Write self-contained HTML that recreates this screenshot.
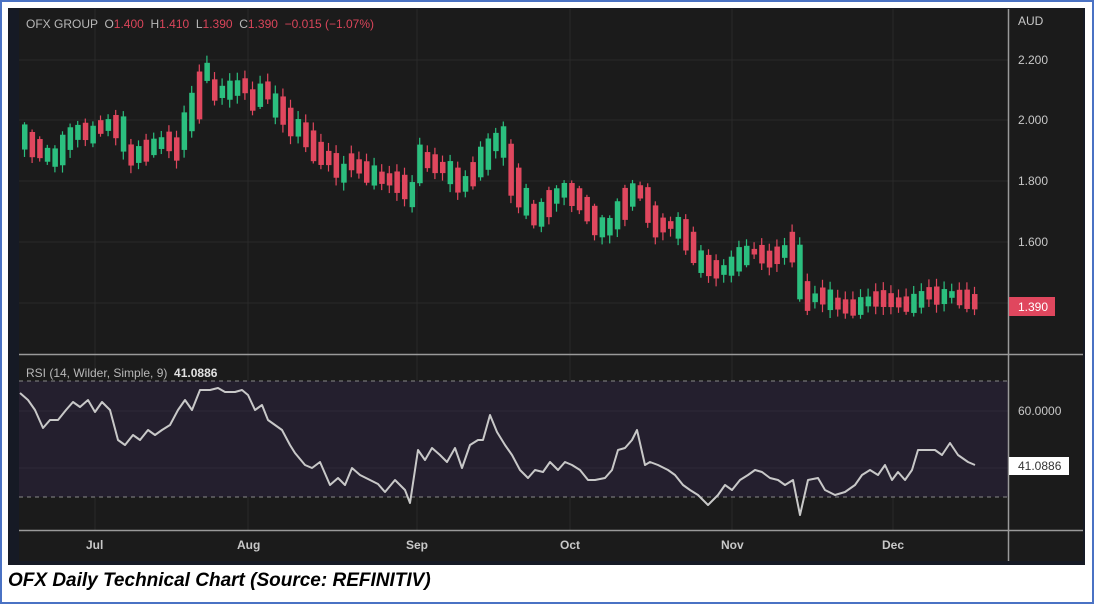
<!DOCTYPE html>
<html><head><meta charset="utf-8"><style>
html,body{margin:0;padding:0;width:1094px;height:604px;overflow:hidden;background:#fff;}
#wrap{position:absolute;left:0;top:0;width:1090px;height:600px;border:2px solid #4a72c4;background:#fff;}
#cap{position:absolute;left:8px;top:570px;font-family:"Liberation Sans",sans-serif;font-style:italic;font-weight:bold;font-size:19px;color:#000;}
svg text{font-family:"Liberation Sans",sans-serif;white-space:pre;}
</style></head><body>
<div id="wrap"></div>
<svg id="s" width="1094" height="604" style="position:absolute;left:0;top:0">
<rect x="8" y="8" width="1077" height="557" fill="#161a25"/>
<rect x="19" y="9" width="1064" height="552" fill="#1b1b1b"/>
<g stroke="#2a2a2a" stroke-width="1">
<line x1="19" x2="1008" y1="60" y2="60"/><line x1="19" x2="1008" y1="120" y2="120"/><line x1="19" x2="1008" y1="181" y2="181"/><line x1="19" x2="1008" y1="242" y2="242"/><line x1="19" x2="1008" y1="303" y2="303"/>
<line x1="95" x2="95" y1="9" y2="530"/><line x1="248" x2="248" y1="9" y2="530"/><line x1="417" x2="417" y1="9" y2="530"/><line x1="570" x2="570" y1="9" y2="530"/><line x1="732" x2="732" y1="9" y2="530"/><line x1="893" x2="893" y1="9" y2="530"/>
</g>
<rect x="19" y="381" width="989" height="116" fill="#241f2e"/>
<line x1="19" x2="1008" y1="411" y2="411" stroke="#2e2a38"/>
<line x1="19" x2="1008" y1="468" y2="468" stroke="#2e2a38"/>
<line x1="19" x2="1008" y1="381" y2="381" stroke="#888" stroke-dasharray="4 4"/>
<line x1="19" x2="1008" y1="497" y2="497" stroke="#888" stroke-dasharray="4 4"/>
<line x1="19" x2="1083" y1="354.5" y2="354.5" stroke="#9a9a9a" stroke-width="1.5"/>
<line x1="19" x2="1083" y1="530.5" y2="530.5" stroke="#9a9a9a" stroke-width="1.5"/>
<line x1="1008.5" x2="1008.5" y1="9" y2="561" stroke="#9a9a9a" stroke-width="1.5"/>
<g id="cd"></g>
<polyline id="rsi" fill="none" stroke="#c8c8c8" stroke-width="2" stroke-linejoin="round"/>
<text x="26" y="28" font-size="12" fill="#b8b8b8">OFX GROUP  O<tspan fill="#d9455a">1.400</tspan>  H<tspan fill="#d9455a">1.410</tspan>  L<tspan fill="#d9455a">1.390</tspan>  C<tspan fill="#d9455a">1.390</tspan>  <tspan fill="#d9455a">−0.015 (−1.07%)</tspan></text>
<text x="26" y="377" font-size="12" fill="#b8b8b8">RSI (14, Wilder, Simple, 9)  <tspan fill="#e0e0e0" font-weight="bold">41.0886</tspan></text>
<g font-size="12" fill="#c8c8c8">
<text x="1018" y="25">AUD</text><text x="1018" y="64">2.200</text><text x="1018" y="124">2.000</text><text x="1018" y="185">1.800</text><text x="1018" y="246">1.600</text>
<text x="1018" y="415">60.0000</text>
<text x="86" y="549" font-weight="bold">Jul</text><text x="237" y="549" font-weight="bold">Aug</text><text x="406" y="549" font-weight="bold">Sep</text><text x="560" y="549" font-weight="bold">Oct</text><text x="721" y="549" font-weight="bold">Nov</text><text x="882" y="549" font-weight="bold">Dec</text>
</g>
<rect x="1009" y="297" width="46" height="19" fill="#e0475e"/>
<text x="1018" y="311" font-size="12" fill="#fff">1.390</text>
<rect x="1009" y="457" width="60" height="18" fill="#fff"/>
<text x="1018" y="470" font-size="12" fill="#333">41.0886</text>
</svg>
<div id="cap">OFX Daily Technical Chart (Source: REFINITIV)</div>
<script>
var P=[20,135,30,145,40,150,50,160,60,150,70,135,80,130,90,135,100,125,110,125,120,130,125,155,135,155,145,150,155,145,165,140,175,150,182,130,190,110,197,95,205,70,212,90,220,92,228,90,235,88,242,85,250,100,258,95,265,90,272,105,280,110,290,125,300,130,310,145,320,155,330,160,340,175,350,160,360,170,370,175,380,178,390,180,400,185,410,195,415,165,425,160,435,165,445,170,455,180,465,185,475,165,485,155,492,145,498,130,505,160,512,180,520,195,528,210,535,220,545,205,555,195,562,190,570,195,578,200,585,210,595,225,605,230,615,215,625,200,635,190,642,195,650,220,660,225,670,225,680,230,690,245,695,260,705,265,715,270,725,270,735,260,745,255,755,250,765,260,775,255,785,250,793,245,800,290,808,300,818,295,828,300,838,305,848,308,858,306,868,300,878,298,888,300,898,303,908,305,918,300,928,292,938,298,948,294,958,298,968,300,975,303];
function interp(A,x){for(var i=0;i<A.length-2;i+=2){if(x<=A[i+2])return A[i+1]+(A[i+3]-A[i+1])*(x-A[i])/(A[i+2]-A[i]);}return A[A.length-1];}
var g=document.getElementById('cd'),h='',k=0;
for(var x=22;x<=975;x+=7.6){k++;var m=interp(P,x),d=interp(P,x+7.6)-interp(P,x-7.6);
var amp=4+Math.abs(Math.sin(k*2.3))*12+Math.abs(d)*0.8;var dir=(d<0)?1:-1;if(Math.sin(k*1.9)>0.75)dir=-dir;
var c=m-dir*amp/2,o=m+dir*amp/2;var up=c<o;var col=up?'#2bbf7f':'#e0475e';var t=Math.min(o,c),b=Math.max(o,c);if(b-t<2)b=t+2;
var wt=2+Math.abs(Math.sin(k*3.1))*6,wb=2+Math.abs(Math.cos(k*2.7))*6;
h+='<line x1="'+(x+2.5)+'" x2="'+(x+2.5)+'" y1="'+(t-wt)+'" y2="'+(b+wb)+'" stroke="'+col+'" stroke-width="1.2"/><rect x="'+x+'" y="'+t+'" width="5.5" height="'+(b-t)+'" fill="'+col+'"/>';}
g.innerHTML=h;
var R=[20,393,28,400,35,410,43,428,50,420,58,420,66,410,73,402,80,407,88,400,95,412,102,402,110,410,118,440,125,445,133,435,140,440,148,430,155,435,162,430,170,425,178,410,185,400,192,410,200,390,210,390,218,388,225,392,235,392,242,390,248,395,255,410,262,405,268,420,275,425,282,430,290,445,295,453,305,465,312,468,320,462,330,485,338,478,345,485,352,468,360,475,370,480,378,484,385,492,395,480,405,490,410,503,418,450,425,460,432,448,440,455,447,462,455,448,462,468,470,445,478,440,483,440,490,415,497,432,505,445,512,455,520,470,528,478,535,470,543,472,550,462,558,470,565,462,572,465,580,470,588,480,595,480,605,478,612,470,618,450,625,448,632,440,637,430,645,465,650,462,658,465,668,470,675,475,683,485,690,490,698,495,708,505,718,495,725,485,732,490,740,480,748,475,755,470,762,472,770,478,778,480,785,485,793,480,800,515,808,480,818,478,825,490,835,495,845,492,855,485,862,475,870,470,878,475,885,465,892,480,898,472,905,480,912,470,918,450,928,450,935,450,942,455,950,443,958,455,968,462,975,465];
var pts=[];for(var i=0;i<R.length;i+=2)pts.push(R[i]+','+R[i+1]);
document.getElementById('rsi').setAttribute('points',pts.join(' '));
</script>
</body></html>
